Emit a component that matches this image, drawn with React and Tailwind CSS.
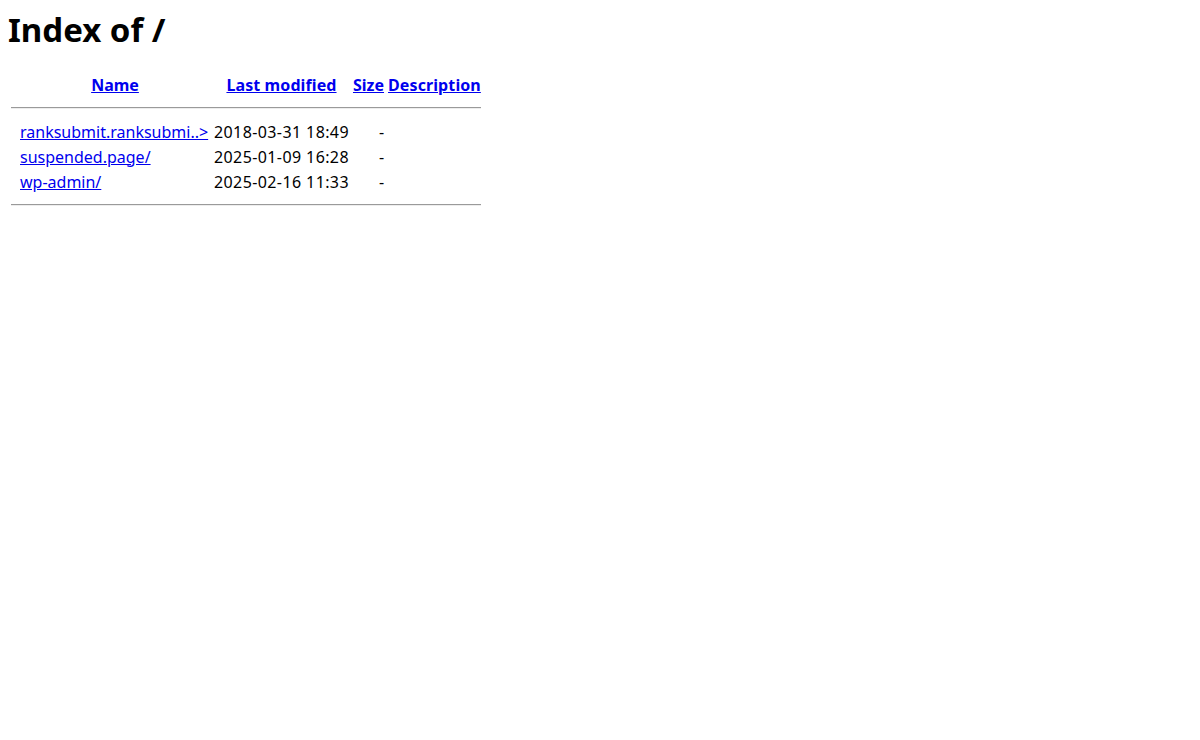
export default function App() {
  const rows = [
    { name: "ranksubmit.ranksubmi..>", date: "2018-03-31 18:49" },
    { name: "suspended.page/", date: "2025-01-09 16:28" },
    { name: "wp-admin/", date: "2025-02-16 11:33" },
  ];
  const link = "text-[#0000ee] underline";
  return (
    <div className="min-h-[740px] bg-white px-2 text-black font-['Noto_Sans','Noto_Sans_CJK_SC',sans-serif] text-[16px]">
      <h1 className="pt-[10px] mb-[21.5px] text-[33px] leading-[40px] font-bold">Index of /</h1>
      <table className="border-separate border-spacing-[2px] leading-[21px]">
        <tbody>
          <tr>
            <th className="p-px w-[7px] font-bold">&nbsp;</th>
            <th className="p-px w-[192px] text-center font-bold"><a className={link} href="#">Name</a></th>
            <th className="p-px w-[135px] text-center font-bold tracking-[0.1px]"><a className={link} href="#">Last modified</a></th>
            <th className="p-px w-[32px] text-center font-bold"><a className={link} href="#">Size</a></th>
            <th className="p-px text-center font-bold tracking-[0.1px]"><a className={link} href="#">Description</a></th>
          </tr>
          <tr>
            <th colSpan={5} className="p-px">
              <hr className="mt-[7px] mb-[9px] h-0 border-t border-t-[#9a9a9a] border-b border-b-[#ededed]" />
            </th>
          </tr>
          {rows.map((r) => (
            <tr key={r.name}>
              <td className="p-px"></td>
              <td className="p-px text-left whitespace-nowrap"><a className={link} href="#">{r.name}</a></td>
              <td className="p-px text-left whitespace-nowrap tracking-[0.4px]">{r.date}</td>
              <td className="p-px text-right">-</td>
              <td className="p-px">&nbsp;</td>
            </tr>
          ))}
          <tr>
            <th colSpan={5} className="p-px">
              <hr className="mt-[7px] mb-2 h-0 border-t border-t-[#9a9a9a] border-b border-b-[#ededed]" />
            </th>
          </tr>
        </tbody>
      </table>
    </div>
  );
}
